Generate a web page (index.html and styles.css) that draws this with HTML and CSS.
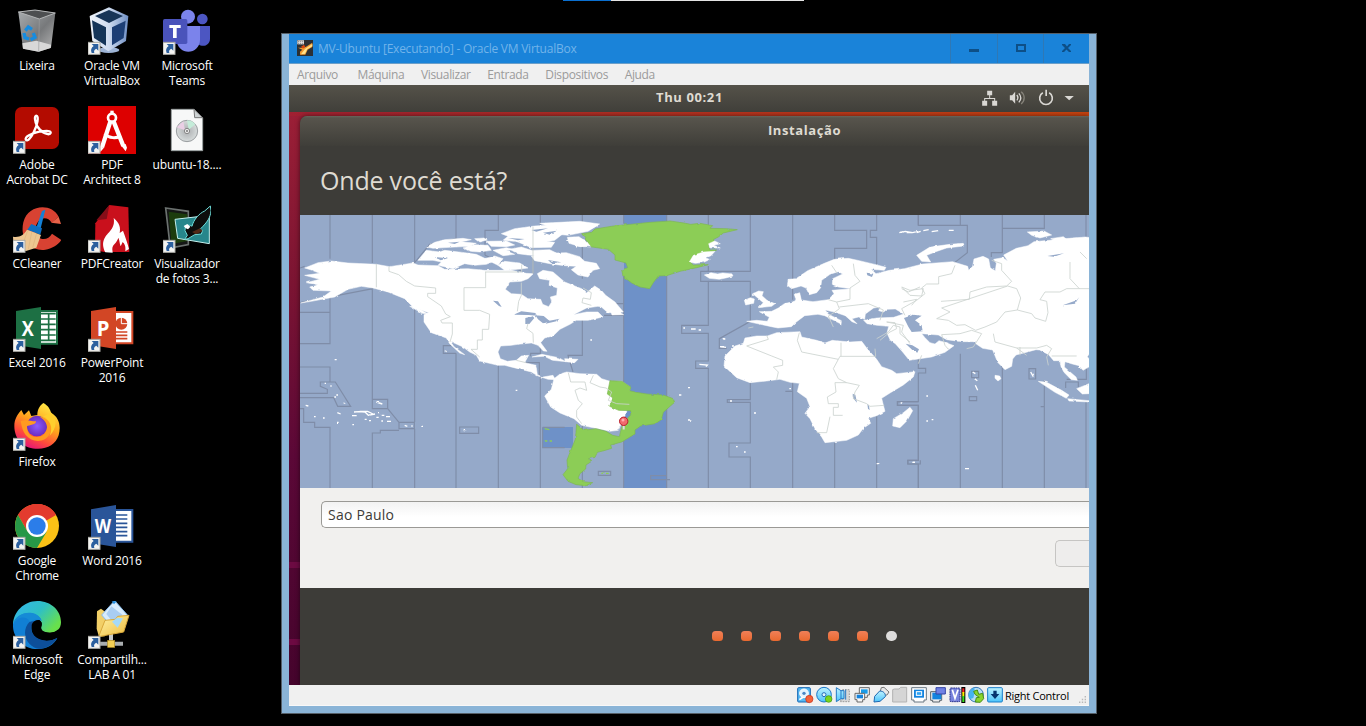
FILE: index.html
```
<!DOCTYPE html>
<html lang="pt-BR">
<head>
<meta charset="utf-8">
<title>MV-Ubuntu - Oracle VM VirtualBox</title>
<link rel="stylesheet" href="styles.css">
</head>
<body>
<svg class="defs" width="0" height="0">
  <defs>
    <g id="shortcut">
      <rect x="1" y="107" width="36" height="36" fill="#f4f4f2" stroke="#a9a9a4" stroke-width="3"/>
      <path d="M12 112h20v20l-6-6c-6 3-8 6-6 13h-8c-4-9-1-16 6-21z" fill="#2b5f9e"/>
    </g>
    <linearGradient id="bin" x1="0" x2="1" y2="1"><stop stop-color="#a9adb0"/><stop offset=".55" stop-color="#77797b"/><stop offset="1" stop-color="#b9b9b9"/></linearGradient>
    <linearGradient id="cube" x1="0" x2="1"><stop stop-color="#eef3fa"/><stop offset=".5" stop-color="#cfdcf0"/><stop offset="1" stop-color="#6f8fc4"/></linearGradient>
    <linearGradient id="fox" x1=".8" x2=".3" y2="1"><stop stop-color="#fff04a"/><stop offset=".45" stop-color="#ffa31c"/><stop offset=".75" stop-color="#ff4a3c"/><stop offset="1" stop-color="#e3107c"/></linearGradient>
    <radialGradient id="globe"><stop stop-color="#8a5cff"/><stop offset="1" stop-color="#6b2ec0"/></radialGradient>
    <linearGradient id="edgeTop" x1="0" x2="1" y2=".6"><stop stop-color="#35b6f0"/><stop offset=".55" stop-color="#2fc0c4"/><stop offset="1" stop-color="#68e04c"/></linearGradient>
    <linearGradient id="folder" x2="1" y2="1"><stop stop-color="#fff3a8"/><stop offset="1" stop-color="#eebb3c"/></linearGradient>
    <linearGradient id="sky" y2="1" x2="0"><stop stop-color="#bdf2ff"/><stop offset="1" stop-color="#4cc4fb"/></linearGradient>
    <radialGradient id="disc"><stop stop-color="#fff"/><stop offset=".25" stop-color="#b5b8ba"/><stop offset="1" stop-color="#d7dcdc"/></radialGradient>
  </defs>
</svg>

<div class="tasklight"></div>

<main class="desktop">
  <div class="column">
  <a class="item"><svg viewBox="39 21 144 144"><path d="M55 36l50-6 61 9-13 104-37 12-47-9z" fill="url(#bin)"/><path d="M55 36l50-6 61 9-48 18z" fill="#4d4f51" stroke="#b4b6b7" stroke-width="3"/><path d="M67 130l42-8 44 12-1 10-36 11-47-9z" fill="#d8d8d8"/><path d="M118 57l-2 98" stroke="#9b9d9f" stroke-width="2"/><g fill="none" stroke="#168ce0" stroke-width="10"><path d="M76 92l9-11 11 7M72 99l3 14 12 4M92 119l13-7-5-13"/></g></svg><span>Lixeira</span></a>
  <a class="item"><svg viewBox="39 318 144 144"><rect x="45" y="321" width="132" height="126" rx="20" fill="#b30b00"/><path d="M78 420c-7-9 18-21 40-25 23-3 36-3 34 4-3 10-30-2-40-20-9-16-9-32-3-32 8 0 4 28-8 50-8 15-18 28-23 23z" fill="none" stroke="#fff" stroke-width="7"/><g transform="translate(38 317)"><use href="#shortcut"/></g></svg><span>Adobe<br>Acrobat DC</span></a>
  <a class="item"><svg viewBox="39 30 144 144"><path d="M176 65C155 24 84 27 70 82c-12 54 25 88 66 82 20-3 38-15 48-29l-28-19c-13 25-49 21-49-12 0-34 33-46 48-21z" fill="#d84232"/><path d="M176 65l-22 18 29 4z" fill="#e86248"/><path d="M126 48l10-4-14 56-13-2z" fill="#1380d6"/><path d="M94 87l32 13-5 19-39-15z" fill="#0f6fc1"/><path d="M81 104l42 16-14 38-31 10-37-10-2-33c19 3 31-4 42-21z" fill="#edc691"/><path d="M83 107l-18 49M95 112l-10 51M109 118l-11 40" stroke="#dcb37b" stroke-width="2"/><g transform="translate(38 29)"><use href="#shortcut"/></g></svg><span>CCleaner</span></a>
  <a class="item"><svg viewBox="39 327 144 144"><path d="M118 348h53v98h-53z" fill="#fff" stroke="#1d7044" stroke-width="6"/><path d="M122 356h45M122 372h45M122 388h45M122 404h45M122 420h45M122 436h45M146 354v84" stroke="#1d7044" stroke-width="5"/><path d="M48 348l75-12v126l-75-12z" fill="#1d7044"/><text x="65" y="422" textLength="36" lengthAdjust="spacingAndGlyphs" class="logo">X</text><g transform="translate(38 326)"><use href="#shortcut"/></g></svg><span>Excel 2016</span></a>
  <a class="item"><svg viewBox="39 24 144 144"><path d="M130 24c15 8 20 19 24 30 22 12 30 37 22 67-9 28-36 43-70 40-36-2-63-29-63-68 0-20 9-34 21-48l8 15 15-14 7 17 18-3c0-13 5-27 18-36z" fill="url(#fox)"/><circle cx="111" cy="93" r="31" fill="url(#globe)"/><path d="M62 79c18-7 28 0 46 0 2 10-21 11-27 15 0 21 12 32 29 32 19 0 31-12 31-30-1-15-11-24-22-31 29 4 41 28 30 52-13 26-52 28-72 3-11-15-12-29-15-41z" fill="#ff9a20"/><path d="M129 64c20 9 32 34 20 58 23-25 23-50 5-69" fill="#ffcf2d"/><g transform="translate(38 23)"><use href="#shortcut"/></g></svg><span>Firefox</span></a>
  <a class="item"><svg viewBox="39 321 144 144"><circle cx="111" cy="393" r="66" fill="#fbc116"/><path d="M111 393L54 360c25-43 91-44 114 0z" fill="#e33b2e"/><path d="M111 360h57a66 66 0 0 0-114 0l28 49z" fill="#e33b2e"/><path d="M54 360a66 66 0 0 0 57 99l29-49-58-1z" fill="#279847"/><circle cx="111" cy="393" r="33" fill="#fff"/><circle cx="111" cy="393" r="26" fill="#2b7de9"/><g transform="translate(38 320)"><use href="#shortcut"/></g></svg><span>Google<br>Chrome</span></a>
  <a class="item"><svg viewBox="39 618 144 144"><path d="M39 690c0-39 33-72 73-72 42 0 71 29 71 64 0 20-14 31-33 31-21 0-30-8-25-21 6-21-43-50-86-2z" fill="url(#edgeTop)"/><path d="M39 688c10-39 71-47 86-11-15-7-31 5-31 23 0 34 44 49 78 29-11 20-29 33-61 33-42 0-74-35-72-74z" fill="#117fd4"/><path d="M89 680c-32 33-4 84 35 81 23-4 40-17 48-33-32 20-76 4-78-25 0-11 4-19 12-25z" fill="#0d4f9a"/><path d="M39 688c8-40 73-48 86-11-15-9-31 1-36 3-9-16-32-19-50 8z" fill="#168bd6"/><path d="M95 690c3-14 22-19 29-9 4 7-2 12-1 19 2 9 14 13 27 13 11 0 20-4 25-10 2 12-3 24-15 27-35 5-66-12-65-40z" fill="#000"/><g transform="translate(38 617)"><use href="#shortcut"/></g></svg><span>Microsoft<br>Edge</span></a>
  </div>

  <div class="column">
  <a class="item"><svg viewBox="264 21 144 144"><ellipse cx="326" cy="150" rx="32" ry="9" fill="#9eb4d6"/><path d="M327 22l58 26-7 75-53 31-48-31-8-75z" fill="url(#cube)"/><path d="M327 30l42 18-42 21-42-21z" fill="#173457"/><path d="M276 61l42 21v55l-36-23z" fill="#153559"/><path d="M336 82l41-20-6 52-35 22z" fill="#1d3f75"/><g transform="translate(263 20)"><use href="#shortcut"/></g></svg><span>Oracle VM<br>VirtualBox</span></a>
  <a class="item"><svg viewBox="264 318 144 144"><path fill="#d00" d="M264 318h144v144H264z"/><g stroke="#fff" fill="none"><circle cx="336" cy="353" r="12" stroke-width="8"/><path d="M331 365l-25 77M341 365l29 73" stroke-width="13"/><path d="M314 401c13 14 36 16 47 5" stroke-width="9"/><path d="M336 332v12" stroke-width="10"/></g><path d="M364 437l13-5 4 11-4 11zM299 439l13 4-11 13z" fill="#fff"/><g transform="translate(263 317)"><use href="#shortcut"/></g></svg><span>PDF<br>Architect 8</span></a>
  <a class="item"><svg viewBox="264 30 144 144"><path d="M328 30l57 7 3 134h-75l-28-5 1-81z" fill="#c9101c"/><path d="M328 30l-8 42-31 4z" fill="#850d18"/><path d="M316 172c-16-32 1-49 12-61 12-13 16-26 13-42 19 16 21 31 18 45l10-7c7 19 14 39 18 55l-11 7c2-17-3-23-8-28l-6 13c-4-11-3-18-7-26-5 15-12 18-16 25-4 7-1 14-1 20z" fill="#fff"/><g transform="translate(263 29)"><use href="#shortcut"/></g></svg><span>PDFCreator</span></a>
  <a class="item"><svg viewBox="264 327 144 144"><path d="M343 351h54v94h-54z" fill="#fff" stroke="#d24625" stroke-width="6"/><circle cx="364" cy="386" r="18" fill="#d24625"/><path d="M364 366v20h20" fill="none" stroke="#fff" stroke-width="3"/><path d="M348 411h34M348 421h34M348 431h34" stroke="#d24625" stroke-width="5"/><path d="M273 348l75-12v126l-75-12z" fill="#d24625"/><text x="290" y="422" textLength="38" lengthAdjust="spacingAndGlyphs" class="logo">P</text><g transform="translate(263 326)"><use href="#shortcut"/></g></svg><span>PowerPoint<br>2016</span></a>
  <a class="item row6"><svg viewBox="264 321 144 144"><path d="M343 345h54v95h-54z" fill="#fff" stroke="#2a5599" stroke-width="6"/><path d="M348 360h34m-34 12h34m-34 13h34m-34 12h34m-34 13h34m-34 12h34" stroke="#2a5599" stroke-width="5"/><path d="M273 343l75-13v126l-75-12z" fill="#2a5599"/><text x="284" y="415" textLength="49" lengthAdjust="spacingAndGlyphs" class="logo word">W</text><g transform="translate(263 320)"><use href="#shortcut"/></g></svg><span>Word 2016</span></a>
  <a class="item row7"><svg viewBox="264 618 144 144"><path d="M264 746h105" stroke="#a9adaf" stroke-width="12"/><path d="M333 710v38" stroke="#c6c9ca" stroke-width="12"/><rect x="323" y="736" width="21" height="21" fill="#f3cf55" stroke="#b18d25" stroke-width="2"/><path d="M291 649l12-8 12 9v74l-18 1-7-24z" fill="#f2cf67"/><path d="M344 617l39 44-41 42-37-43z" fill="#d9ecfc" stroke="#8abdec" stroke-width="3"/><path d="M334 634l33 25-25 27-23-29z" fill="#a9cdf2"/><path d="M297 722l18-46 31-3 7-9 34-3-16 50-70 13z" fill="url(#folder)" stroke="#d9a83a" stroke-width="3"/><path d="M336 680l15-12 18 2-16 28z" fill="#a5d9f7"/><path d="M335 619h15l-8 9z" fill="#208de0"/><g transform="translate(263 617)"><use href="#shortcut"/></g></svg><span>Compartilh...<br>LAB A 01</span></a>
  </div>

  <div class="column">
  <a class="item"><svg viewBox="489 21 144 144"><circle cx="607" cy="57" r="16" fill="#4c56c2"/><path d="M589 78h41v38c0 28-41 29-41 0z" fill="#4c56c2"/><circle cx="564" cy="50" r="21" fill="#7b83eb"/><path d="M530 78h70v40c0 50-70 50-70 0z" fill="#7b83eb"/><rect x="489" y="57" width="73" height="75" rx="5" fill="#4a53bb"/><path d="M508 75h34v9h-12v30h-11V84h-11z" fill="#fff"/><g transform="translate(488 20)"><use href="#shortcut"/></g></svg><span>Microsoft<br>Teams</span></a>
  <a class="item"><svg viewBox="489 318 144 144"><path d="M514 328h68l26 25v99h-94z" fill="#f7f8f8" stroke="#9aa0a0" stroke-width="3"/><path d="M582 328l2 25h24z" fill="#cdd2d3" stroke="#777" stroke-width="3"/><circle cx="561" cy="393" r="32" fill="url(#disc)" stroke="#999da0" stroke-width="3"/><path d="M561 361a32 32 0 0 1 25 12l-20 16z" fill="#c4ecd9"/><path d="M530 382l25 9-5-27z" fill="#eacfe5"/><circle cx="561" cy="393" r="8" fill="#e8e8e8" stroke="#888" stroke-width="3"/><circle cx="561" cy="393" r="3" fill="#777"/></svg><span>ubuntu-18....</span></a>
  <a class="item"><svg viewBox="489 30 144 144"><path d="M497 39l68 10v100l-54 10z" fill="#151716" stroke="#6b716f" stroke-width="5"/><path d="M506 50l56 8v80l-48 9z" fill="#1c3c0d"/><path d="M525 73l103-12v85l-95-16z" fill="#27868b" stroke="#c4efec" stroke-width="3"/><path d="M556 97c8-9 15-7 20-3 5-21 22-39 38-46l17-15 2 14c-2 22-11 34-31 54l-14 9 20-4-4 11-20 2-20 12-10 2 8-12-7-14z" fill="#0d0d0c" stroke="#6ddedb" stroke-width="3"/><path d="M551 93l11-6 9 8-7 8-8-4z" fill="#fff"/><path d="M576 111l24-11 8 8-20 10z" fill="#512816"/><g transform="translate(488 29)"><use href="#shortcut"/></g></svg><span>Visualizador<br>de fotos 3...</span></a>
  </div>
</main>

<section class="window">
  <div class="inner">
    <header class="titlebar">
      <svg class="appicon" viewBox="0 0 48 48"><path fill="#2c3034" d="M0 0h48v48H0z"/><path d="M3 23h14l9-2L46 8v13l-14 8-7 15H9v-9l7-6z" fill="#f29a30"/><path d="M25 26l21-14v7l-15 8-7 14-12 2 9-12z" fill="#ffe28a"/><path d="M12 20l9-6 4 6-7 6z" fill="#d9480f"/><path fill="#e8e8e8" d="M1 1h20v12H1z"/><path d="M3 5h17M3 10h17" stroke="#888" stroke-width="3" stroke-dasharray="4 2"/></svg>
      <h1>MV-Ubuntu [Executando] - Oracle VM VirtualBox</h1>
      <div class="controls">
        <i><svg width="10" height="10"><path d="M0 6h10v3H0z"/></svg></i>
        <i><svg width="10" height="8"><path fill-rule="evenodd" d="M0 0h10v8H0zM2 2v4h6V2z"/></svg></i>
        <i><svg width="10" height="8"><path d="M0 0h3l2 2.500L7 0h2v1L6 4l3 3v1H7L4.500 5.500 2 8H0V7l3-3L0 1z"/></svg></i>
      </div>
    </header>
    <nav class="menu"><span>Arquivo</span><span>Máquina</span><span>Visualizar</span><span>Entrada</span><span>Dispositivos</span><span>Ajuda</span></nav>

    <div class="guest">
      <div class="panel">
        <b>Thu 00:21</b>
        <svg class="tray" viewBox="900 265 290 60" width="97" height="20"><g fill="#dad8d4"><path d="M921 273h15v14h-15zM906 303h15v15h-15zM936 303h15v15h-15zM927 287h3v8h15v8h-3v-5h-27v5h-3v-8h15z"/><path d="M989 287h7l9-11v36l-9-10h-7z"/><path d="M1153 289h28l-14 13z"/></g><g fill="none" stroke="#dad8d4" stroke-width="4"><path d="M1010 286c4 5 4 11 0 16M1016 281c7 8 7 19 0 27"/><path d="M1023 276c12 9 12 28 0 37" stroke="#858279"/><path d="M1088 279a19 19 0 1 0 19 0" stroke-width="5"/><path d="M1098 270v19" stroke-width="5"/></g></svg>
      </div>
      <div class="wallpaper">
        <div class="installer">
          <div class="dialogbar">Instalação</div>
          <h2>Onde você está?</h2>
          <svg class="map" viewBox="300 215 789 273" width="789" height="273">
            <defs><filter id="coast" x="-2%" y="-2%" width="104%" height="104%"><feTurbulence type="fractalNoise" baseFrequency=".18" numOctaves="2" seed="7"/><feDisplacementMap in="SourceGraphic" scale="2.200" xChannelSelector="R" yChannelSelector="G"/></filter></defs>
            <path d="M300 215h789v273H300z" fill="#95a9c9"/>
            <path d="M624 215h43v273h-43zM543 427h30v21h-30z" fill="#6e91c8"/>
            <!-- time zone boundaries -->
            <g class="zones">
              <g transform="translate(298 212) scale(.33333)"><path d="M96 0V140M96 252V301H6M6 395H96V301M6 465H96V509M6 544H88V532L67 523V510H112L158 583H119L107 557H6M6 590H17V631H50V646H96V830M223 0V153M223 228V562H269V590H223V562M269 590L303 631H349V650H303V631M303 655H247V663H223V830M350 0V152L395 97 474 80V9M350 292V630M350 650V830M474 424V830M474 424H436V401H460M561 130V55H601V9M561 130L671 178M601 460V830M727 0V44M705 42V185M727 395V424H698V433M684 452H724V493M727 496V830M485 645H542V664H485ZM734 646H800M734 646V707H800M6 272L225 230M6 168L20 163M853 0V45M853 103V200M853 320V430H810L825 480"/></g>
              <g transform="translate(560 212) scale(.33333)"><path d="M67 635V830M191 0V35M191 190V830M320 0V28M320 190V830M445 0V38M445 162V178H422V208H445V340H365V364H445V447H407V469H445V830M132 310H191M160 275H191M115 778H152V790H115ZM330 803H272V791H320"/></g>
              <g transform="translate(700 212) scale(.33333)"><path d="M151 0V178H20M25 208H151V328L58 380V409H80M151 370V372M151 513V563H82V571H151V693H87V735H151V830M278 0V263M278 510V538H256M278 538V830M404 0V55H500V109H404V152M404 693V830M530 0V55H511V76H530V165M530 613V830M655 0V40M655 569H593V580H655V745H623V756H655V830"/></g>
              <g transform="translate(880 212) scale(.33333)"><path d="M115 0V40H262V122L220 155M115 415V469H137V483H115V569H52V580H115V745H84V756H121V745M115 756V830M241 0V40M241 425V830M367 0V49H493V9M367 49V122H334V135M367 450V830M493 505V830M618 0V85M580 432L585 455 619 466V502H560M557 528V510H595V525M618 570V830M275 478H296V497H275ZM268 554H290V566H268ZM447 470H467V501H447ZM482 584H493"/></g>
            </g>
            <g class="land" filter="url(#coast)">
              <!-- North America -->
              <g transform="translate(298 212) scale(.33333)">
                <path d="M20 168L60 152 100 147 150 153 235 157 275 164 345 153 360 159 420 161 440 172 510 170 560 175 640 175 685 184 706 185 690 200 670 208 635 210 622 232 640 245 670 247 690 260 728 262 734 277 752 284 761 270 757 255 776 250 778 228 753 220 755 205 725 200 718 185 735 175 765 180 800 210 851 230 865 243 890 222 910 235 923 250 951 270 976 300 930 302 910 285 900 283 866 288 826 308 866 300 900 300 915 315 870 325 835 325 816 337 786 352 765 372 740 378 728 392 747 418 736 417 720 400 700 393 660 397 640 400 608 402 600 420 607 440 628 448 655 445 670 432 692 430 680 452 714 460 718 488 735 495 765 490 772 503 750 502 720 492 700 480 660 470 620 460 600 460 545 447 535 430 515 420 495 405 457 388 468 404 500 428 485 423 455 395 445 378 400 362 378 330 378 308 392 302 345 285 320 260 270 240 225 228 190 223 150 232 110 255 40 268 8 273 75 255 100 237 45 235 35 225 60 218 25 212 65 202 20 190 65 184 40 174z"/>
                <path d="M360 145l25-30 40 5 15-5 60 7 35 5 25 12 35 6-30 12-35 3-30-5-35 15-45-10 10-10-25-5zM385 105l25-14 30-8 55-4 25 4-30 6 45 5-20 9-60 3-50 3zM495 108l35-10 40 2 10 15-35 5-30-2zM530 80l28-2 10 6-25 6zM565 88l60-1 25 12-25 5-45-1zM585 115l40-8 20 5-20 5 25 10-35 4zM635 112l35-7 30 10-10 14-30-4zM560 140l30-8 25 8-15 20zM600 160l20-12 45 5 25 15-30 4-40 3zM610 65l40-15 60-8 90-6 100 4-30 15-75 10-25 20-40 8-60-3-55-5 15-12z"/>
                <path d="M655 88l60-1 55 4-10 15-60 1zM675 116l80-3 20 10-40 9-45-3zM700 132l45-8 60-2 40 12 15 14 35 6 10 16-20 5-15 20-30-6-20-16 15-10-35-2-40-5-50-10zM725 34l120-6 60 8-35 22-60 12-50-5 20-12zM808 76l35-2 35 26-30 4-35-10zM335 283l18 0 28 18 10 5-18-2zM702 435l30-8 50 10 22 12-40-4-25-12zM800 440l40 2-10 10-28-3zM935 290l20 5 22 13-35 1z"/>
                <path class="water" d="M630 78l50 3-20 4zM735 62l42-6-22 12zM750 144l40 7-30 3zM450 92l35-3-15 7zM410 135l40 4-22 6zM700 54l50-5-35 10z"/>
                <path class="isles" d="M440 417l6 2M80 514h4M97 522h4M115 549h5M109 555h5M137 573h5M23 580l8 2M48 614h5M75 618h5M118 602l10 4M117 631h5M163 638h5M162 611h14M168 600l15-1 18 1 10 10 20-4M185 598h24l16 8M200 622h6M213 626h6M235 570l18 6M240 602h4M235 616h7M251 610h8M264 614h12M250 627h5M265 628h14M320 640l8 3M340 642h4M370 643h5M497 656h8M110 443h6M653 535h5M877 384h5"/>
                <path class="water" d="M585 266l15 2 11 17-8-3zM650 307l20-9 42 5 5 8-25-2-42-1zM682 318l22-5 5 5-15 18h-12zM712 310l25 2 18 15-20 7-15-12zM735 330l50-10-10 8-35 8z"/>
                <path class="isles greenisles" d="M740 650l14 3M740 687h8M755 687h7"/>
              </g>
              <!-- Greenland and South America -->
              <g transform="translate(560 212) scale(.33333)">
                <path class="green" d="M65 65l30-4 10-10 55-9 40-4 70-7 60-4 42 6 20 4 28-3 38 7-8 8 50 1 32 3-42 10-15 12-14 7 4 11-20 6 5 15 20 0-30 12-40 3-10 20 10 10 45-1-35 9-50 11-40 13-25 1-15 20-11 18-29-5-25-12-26-20-4-20 18-6-5-14-33-9 0-15-20-17-35-5-20-3-10-20z"/>
                <path d="M388 150l12-20 30-10 35-2-12 13-15 6 13 5-20 9-25 3zM446 95l18-8 17 8-20 5 20 8-32-1zM22 85l30-8 25 8 16 20-40-2zM433 189l20-7 20 4 15-3 28 3 3 6-18 5-23 5-30-3z"/>
                <path class="isles" d="M370 348h5M393 351h14M416 354h7M418 457l24 2-4 5M488 380h6M480 404h12M384 527h6M357 549h7M384 624h10"/>
                <path d="M-18 500L0 486 20 480 60 485 110 487 125 500 150 508 185 508 210 525 200 600 175 655 150 658 65 640 42 620 0 603-28 585-46 552-26 532z"/>
                <path class="green" d="M150 506l36 2 27 18-4 10 20 5 32 5 49 3 30 11 4 11-14 12-20 18-6 22-18 12-44 7-17 12 0 12-40 24-33 9 3 10-23 7-20 5-7 15-20 4 10 8-17 11-1 12-17 14-6 14 16 10 28 3-21 9-29-3-24-10-15-20 14-18-2-26 12-30 13-32 4-45 22 18 36-5 30 8 20 12 20 4 7-28 15-25 12-12 0-13-36-1-27-12 10-25-17-12z"/>
                <path class="isles greenisles" d="M124 784l10-1M138 784h8"/>
              </g>
              <!-- Eurasia, Africa and Asia -->
              <g transform="translate(700 212) scale(.33333)">
                <path d="M140 328l30-3 32 3 6-12-30-17 37-1 20-10 18-13 30-7 8-8-7-12 15-6 5 22 35 5 46-6 17-18-6-10 59-5-40-5-18-8 1-17 30-14-13-7-25 8-25 18-3 22-12 15-22 6-10-20-15-6-28 8-13-10 3-18 23-2 35-24 50-22 30-12 42-3 33 7 50 12 30 8-5 9-40-3 15 13 40-10 45-5 55-14 90-7 45 14 3 12 12-12 4-22 27-8 17 8 5 27 15 8 3-22-8-12 27-5 15 10-12-18 38-20 35-8 18-12 55-5 50-5 50-4 50 8v330l-25 4-12 5-8 12 12 15 0 12-25 14-12-14-20-5-22-7-2 16 35 30 4 10-18-2-22-22-9-17-3-18-19 0-15-18-27-14-11-1-60 16-10 12-3 22-20 10-22-22-15-37-30-5-15-10-13-10-35 0-45-6-25-14-25-2-25-2 10 12 15 15 15 4 12-10 18 5 27 10-27 20-40 14-67 10-20-25-22-25-15-10-10-22 5-20-35-3-30-5-10-10 40-7 50-2 30-10-25-15-25 1-10 8-15-4 5-11-20 3-25 18-2 16-18-7-20 5 15 15-15-6-20-18-30-10-30-7 8 12 40 20-1 10-22-11-27-14-20-4-40 4-25 19-15 14-40 4-20-4zM158 245l18-8 14 2-4 12 15 14 24 10-10 8-40 4 15-15-14-12zM133 265l18-8 12 4-2 13-24 5zM283 247l14-3 5 16-14 4z"/>
                <path d="M170 372l32 0 28-10 70-3 5 16 45 10 25 8 22-8 53 5 35-2 15 20 30 34 15 22 30 11 15 10 55-6-5 16-30 24-40 24-25 16 5 20 5 19-25 13-25 8 7 15-22 15-15 20-35 16-65 7-10-17-20-25-15-30-15-16 15-20-10-25-28-20 6-25-28-3-30-9-40 5-50 5-40-15-25-23-13-12 3-30 30-30 25-8 5-16zM580 620l30-18 20-16 8 10-17 30-21 21-22-5z"/>
                <path class="isles" d="M598 62l18-4 22 4 12-3M268 530h5M90 567h6M162 603h6M108 704h5M132 720h5M530 755h5M637 751h8M602 573h5M70 381h6M62 404l16 2M96 402h6"/>
                <path class="water" d="M612 318l28-10 25 3-20 14 20 15 3 18-33 2-10-16zM500 182l20 3-4 10-14-5zM458 545l8 3 5 24-12-14zM502 575l5 6 2 14-5-5zM1088 280l42-15 8-10-13 20zM1042 132l50-8-30 10zM617 395l20 5 20 12-5 10-15-8z"/>
              </g>
              <g transform="translate(880 212) scale(.33333)">
                <path d="M110 130l40-25 60-8 40-3 2 8-52 6-35 12-25 10 12 20-27-2zM442 60l50-3 23 12-35 9-25-8zM512 80l38-6 10 8-30 6zM525 98l45-6 10 6-40 5zM475 508l25 3 45 24 22 14-8 10-34-18zM563 560l64 6v4l-60-3zM590 530l37-15v30l-20 1zM345 490l14 2 4 8-9 7-9-8zM585 440l22-2-5 12-14-2z"/>
                <path class="isles" d="M60 61h10M80 62h16M110 62l12-4M130 56l16-3M155 59l20-3M205 55h16M278 480l8 5M284 500l8 6M286 520l7 15M139 552h5M139 627h5M155 623h5M99 751h6M255 770h12M452 480l8 14"/>
              </g>
            </g>
            <!-- internal borders -->
            <g class="borders">
              <g transform="translate(298 212) scale(.33333)"><path d="M235 155V226M273 164V178L302 188 325 208 350 222 413 228V244H389V254L430 282 443 306 457 314 428 325 432 333H463V366L456 390M561 180H671V158M563 180V227H498V295H545L575 307 572 352H553V384H538V412H519L545 435M670 212V250L662 268 658 298M690 334L686 350 705 364 706 392M655 445L684 452M855 228L880 242 877 262 855 258 852 272 880 280M705 45V185"/></g>
              <g transform="translate(560 212) scale(.33333)"><path d="M25 482L32 510 75 510 80 535 60 528 45 535 55 565 67 575 50 595V615L65 635M100 490L90 512 120 525 138 528M138 528L155 540 145 565 170 575 208 577"/></g>
              <g transform="translate(700 212) scale(.33333)"><path d="M395 160L412 185M460 155L465 190 480 208 450 228V262L410 270 385 263M410 270L418 290 405 300 385 312 400 345M418 285L505 275 550 294 540 325M140 402L205 382 200 370M140 402L215 432 248 445V460L220 465 235 480 230 503M298 362L292 385 305 420 415 442 400 470 415 500 440 512H405L408 540 382 555 385 575H415V586H400V610H428M390 614L380 662H350M415 442L420 433H527L525 410M423 392V433M440 512L478 520 465 540 460 560 500 575 510 583 553 580M145 348L160 345M530 380L565 360 580 340 600 345 600 365 630 390M605 230L625 240 660 225M610 270L650 262 635 280"/></g>
              <g transform="translate(880 212) scale(.33333)"><path d="M225 160L215 185 176 194V216L140 216 125 228 135 245 110 265 65 290 75 310M65 225L90 235 130 230 125 252 90 250zM0 385L30 360 50 350 45 332 20 330 70 340 65 360 90 395M183 268L268 262 270 240 320 225 380 222 395 208 365 175V155L335 145M383 222L410 230 422 258 412 294 375 300 350 330 315 345 287 355 255 338 230 340 205 325 170 320 210 300 185 288zM412 294L455 305 465 318 497 328 504 302 500 268 480 263 495 240 540 240 560 230H627M570 150V200L598 230M620 140L600 120M185 368L240 365 275 355 305 365 280 405 260 410M185 368L195 400 205 412M340 365L345 390 410 408 470 408 500 400 515 410 500 435 505 460M410 408L440 430M420 405V430M515 432H590M115 455L125 430"/></g>
            </g>
            <g class="pin"><path d="M623.700 425v4.500" stroke="#ddd" stroke-width="2"/><circle cx="623.700" cy="421.300" r="4.200" fill="#f26a6e" stroke="#b81e28"/><circle cx="623" cy="420" r="1.500" fill="#ffaeb0"/></g>
          </svg>
          <div class="form">
            <div class="field">Sao Paulo</div>
            <div class="back"></div>
          </div>
          <div class="dots"><i></i><i></i><i></i><i></i><i></i><i></i><i class="off"></i></div>
        </div>
      </div>
    </div>

    <footer class="status">
      <svg viewBox="320 594 48 48"><rect x="322" y="596" width="38" height="43" rx="3" fill="#57b9f3" stroke="#1467b5" stroke-width="3"/><circle cx="341" cy="613" r="13" fill="#e2f4ff" stroke="#fff" stroke-width="3"/><circle cx="341" cy="613" r="5" fill="#4a87c7"/><path d="M327 632l12-8" stroke="#fff" stroke-width="5"/><circle cx="357" cy="630" r="11" fill="#f4623a" stroke="#c52d16" stroke-width="2"/></svg>
      <svg viewBox="377 594 48 48"><circle cx="401" cy="617" r="22" fill="url(#sky)" stroke="#1975c8" stroke-width="3"/><circle cx="401" cy="617" r="6" fill="#dff6ff" stroke="#276fba" stroke-width="3"/><circle cx="415" cy="630" r="10" fill="#7bd51d" stroke="#39920b" stroke-width="2"/></svg>
      <svg viewBox="434 594 48 48"><path d="M456 602h21v36h-27v-5h6z" fill="#d7d7d7" stroke="#999" stroke-width="3" stroke-dasharray="5 3"/><path d="M438 596l14 9h9v24h-9l-14 9zM452 604v25M466 602v30" fill="url(#sky)" stroke="#257ac5" stroke-width="3"/></svg>
      <svg viewBox="491 594 48 48"><path d="M507 596h30v22h-6v7h-18v-7h-6z" fill="#f8f8f8" stroke="#686868" stroke-width="3"/><path d="M512 601h20v13h-20z" fill="#189be9"/><path d="M494 613h29v19h-6v7h-17v-7h-6z" fill="#f8f8f8" stroke="#686868" stroke-width="3"/><path d="M499 617h19v11h-19z" fill="#1482db"/></svg>
      <svg viewBox="548 594 48 48"><path d="M573 596l8-1 15 14-6 9-10 1-10-13z" fill="#e8e8e8" stroke="#777" stroke-width="3"/><path d="M551 639l2-17 15-16c12 0 18 8 17 17l-16 14z" fill="url(#sky)" stroke="#1d68b2" stroke-width="3"/></svg>
      <svg viewBox="605 594 48 48"><path d="M607 602l5-2h14l5-5h18v44h-42z" fill="#d5d5d5" stroke="#b2b2b2" stroke-width="3"/></svg>
      <svg viewBox="662 594 48 48"><path d="M664 596h44v37h-7v6h-30v-6h-7z" fill="#fff" stroke="#697681" stroke-width="3"/><rect x="671" y="602" width="30" height="24" fill="#1384df"/><rect x="678" y="608" width="16" height="11" fill="#31a5f5" stroke="#fff" stroke-width="3"/></svg>
      <svg viewBox="719 594 48 48"><path d="M721 608h33v26h-6v5h-21v-5h-6z" fill="#eee" stroke="#59636b" stroke-width="3"/><path d="M726 611h27v20h-27z" fill="#1384df"/><path d="M737 596h28v19h-28z" fill="#7182e4" stroke="#3443a5" stroke-width="3"/></svg>
      <svg viewBox="776 594 48 48"><rect x="779" y="597" width="30" height="41" rx="3" fill="#7883dc" stroke="#2b338a" stroke-width="3" stroke-dasharray="5 2"/><path d="M786 602l8 26 9-26" fill="none" stroke="#fff" stroke-width="5"/><path d="M813 594h12v48h-12z"/><path d="M816 598h6v13h-6z" fill="#f22"/><path d="M816 609h6v13h-6z" fill="#fe0"/><path d="M816 621h6v18h-6z" fill="#37df1c"/></svg>
      <svg viewBox="833 594 48 48"><circle cx="857" cy="617" r="22" fill="#b5dcf5" stroke="#3476b5" stroke-width="3"/><path d="M852 596c-16 5-22 24-13 34l10-3 4-17z" fill="#44b3f0"/><path d="M850 607l11-4 4 13 12-3 3 16-10 11-15-1 3-13 9-1-13-9z" fill="#89d42d" stroke="#478e13" stroke-width="3"/></svg>
      <svg viewBox="890 594 48 48"><rect x="892" y="596" width="44" height="43" rx="3" fill="url(#sky)" stroke="#187ec9" stroke-width="3"/><path d="M909 605h10v10h8l-13 15-13-15h8z" fill="#06346f"/></svg>
      <span>Right Control</span>
      <svg class="grip" viewBox="0 0 10 10"><path d="M8 0h2v2H8zM4 4h2v2H4zM8 4h2v2H8zM0 8h2v2H0zM4 8h2v2H4zM8 8h2v2H8z" fill="#b9b9b9"/></svg>
    </footer>
  </div>
</section>
</body>
</html>
```
FILE: styles.css
```
* { box-sizing: border-box; }
body { margin: 0; width: 1366px; height: 726px; overflow: hidden; background: #000; font-family: "Open Sans", "Noto Sans", sans-serif; }
svg { display: block; }
.defs { position: absolute; }
.tasklight { position: absolute; top: 0; left: 563px; width: 241px; height: 1px; background: linear-gradient(90deg, #0a6fd0 48px, #e4e4e4 48px); }

.desktop { display: flex; padding-top: 7px; width: 225px; }
.column { display: grid; grid-template-columns: 75px; grid-template-rows: repeat(7, 99px); }
.item { display: flex; flex-direction: column; align-items: center; width: 74px; color: #fff; font-size: 12px; line-height: 15px; text-align: center; white-space: nowrap; letter-spacing: -.19px; }
.item > svg { width: 48px; height: 48px; margin-bottom: 3px; }
.row6 { grid-row: 6; }
.row7 { grid-row: 7; }
.logo { font: bold 64px "Open Sans", sans-serif; fill: #fff; }
.logo.word { font-size: 56px; }

.window { position: absolute; left: 281px; top: 33px; width: 816px; height: 681px; border: 1px solid #555f68; background: #8ab4d7; padding: 0 7px 7px; }
.inner { width: 800px; height: 672px; display: flex; flex-direction: column; }
.titlebar { height: 30px; flex: none; display: flex; align-items: center; background: #1a83d9; border-bottom: 1px solid #6b9fc9; padding-left: 8px; }
.appicon { width: 16px; height: 16px; margin-right: 5px; margin-top: -1px; }
.titlebar h1 { margin: 0; font-size: 12px; line-height: 28px; font-weight: 400; color: #72b4ea; white-space: nowrap; letter-spacing: -.24px; }
.controls { margin-left: auto; display: flex; align-self: stretch; }
.controls i { width: 46px; display: flex; align-items: center; justify-content: center; padding-bottom: 1px; border-left: 1px solid #2f78b5; }
.controls i:first-child { width: 47px; }
.controls svg { fill: #0d4f87; }
.menu { height: 21px; flex: none; background: #f0f0f0; display: flex; padding-left: 8px; gap: 16.700px; color: #9b9b9b; font-size: 12px; line-height: 21px; letter-spacing: -.36px; }
.menu span:first-child { margin-right: 3px; }
.guest { height: 600px; flex: none; width: 800px; overflow: hidden; display: flex; flex-direction: column; color: #dfdbd2; }
.panel { height: 27px; flex: none; display: grid; grid-template-columns: 1fr 97px; align-items: center; padding: 0 12px 2px 0; background: linear-gradient(#555249, #403f3a); }
.panel b { font-size: 13px; padding-left: 110px; text-align: center; line-height: 25px; letter-spacing: .6px; }
.wallpaper { flex: 1; padding: 4px 0 0 11px; background: linear-gradient(90deg, #a02032, #c8430f) 0 0 / 100% 4px no-repeat, linear-gradient(#6c0a42, #6c0a42) 0 450px / 11px 6px no-repeat, linear-gradient(#6c0a42, #6c0a42) 0 527px / 11px 6px no-repeat, linear-gradient(#9b1f36, #7b1432 30%, #5b0837 60%, #45042c); }
.installer { height: 569px; border-top-left-radius: 7px; background: #3d3c38; overflow: hidden; box-shadow: 0 0 5px #0008; }
.dialogbar { height: 30px; width: 1009px; text-align: center; font-size: 13px; font-weight: 700; line-height: 29px; letter-spacing: .6px; background: linear-gradient(#68655b, #57544c 2px, #3f3e39); }
h2 { margin: 0; height: 69px; padding-left: 20px; font-size: 25px; line-height: 68px; font-weight: 400; letter-spacing: -.2px; }

.zones path { fill: none; stroke: #7f8da8; stroke-width: 3.500; }
.land path { fill: #fff; stroke: #fff; stroke-width: 1.500; }
.land .isles { fill: none; stroke-width: 4; }
.land .green { fill: #8ccd57; stroke: #7db752; stroke-width: 2; }
.land .greenisles { stroke: #8ccd57; }
.land .water { fill: #95a9c9; stroke: none; }
.borders path { fill: none; stroke: #cbd2cf; stroke-width: 2.500; }

.form { height: 100px; padding: 13px 0 0 21px; background: #f1f0ee; display: flex; flex-direction: column; gap: 12px; }
.field { height: 27px; border: 1px solid #9a9995; border-right: 0; border-radius: 5px 0 0 5px; background: linear-gradient(#f2f2f2, #fff 60%); color: #3c3b37; font-size: 14px; line-height: 26px; padding-left: 6px; letter-spacing: .22px; }
.back { align-self: flex-end; width: 34px; height: 27px; border: 1px solid #c6c5c3; border-right: 0; border-radius: 5px 0 0 5px; background: #eeedec; }
.dots { display: flex; gap: 18px; padding: 43px 0 0 412px; }
.dots i { width: 11px; height: 10px; border-radius: 3.500px; background: linear-gradient(#f08058, #e9692f); }
.dots .off { background: #dedddc; border-radius: 5px; }

.status { height: 21px; flex: none; display: flex; align-items: center; gap: 3px; padding-left: 508px; background: #f0f0f0; border-bottom: 1px solid #f8f8f8; }
.status svg { width: 16px; height: 16px; flex: none; overflow: visible; }
.status span { font-size: 11px; color: #000; white-space: nowrap; letter-spacing: -.25px; margin-left: -1px; }
.status .grip { width: 7px; height: 7px; margin: 8px 3px 0 auto; }
```
